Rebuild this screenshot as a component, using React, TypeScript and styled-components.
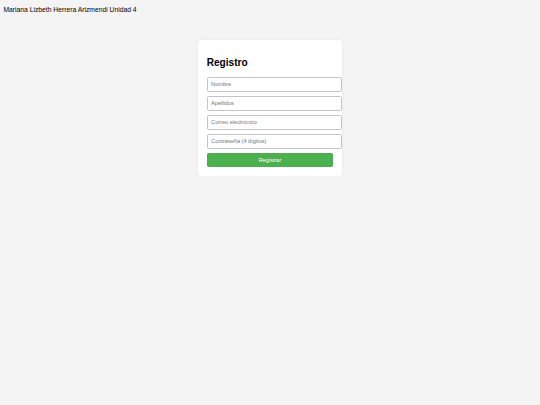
import styled, { createGlobalStyle } from "styled-components";

const GlobalStyle = createGlobalStyle`
  body {
    margin: 3.4px;
    background: #f4f4f4;
    font-family: "Liberation Sans", Arial, sans-serif;
    font-size: 6.75px;
    color: #000;
  }
`;

const Header = styled.div`
  padding-top: 2.5px;
  line-height: 7.8px;
`;

const Card = styled.form`
  width: 126.6px;
  margin: 26.3px auto 0;
  padding: 8.4px;
  background: #fff;
  border-radius: 3.4px;
  box-shadow: 0 0 4px rgba(0, 0, 0, 0.05);
  display: flex;
  flex-direction: column;
`;

const Title = styled.h2`
  font-size: 10.1px;
  font-weight: bold;
  line-height: 11.6px;
  margin: 8.4px 0;
`;

const Field = styled.input`
  width: calc(100% + 8.8px);
  height: 15px;
  box-sizing: border-box;
  padding: 0 3.4px;
  margin: 0 0 4px;
  border: 1px solid #c4c4c4;
  border-radius: 1.7px;
  font-family: "Liberation Sans", Arial, sans-serif;
  font-size: 5.6px;
  &::placeholder {
    color: #757575;
  }
`;

const Submit = styled.button`
  width: 100%;
  height: 14.4px;
  border: none;
  border-radius: 1.7px;
  background: #4caf50;
  color: #fff;
  font-family: "Liberation Sans", Arial, sans-serif;
  font-size: 5.6px;
  cursor: pointer;
`;

export default function App() {
  return (
    <>
      <GlobalStyle />
      <Header>Mariana Lizbeth Herrera Arizmendi Unidad 4</Header>
      <Card onSubmit={(e) => e.preventDefault()}>
        <Title>Registro</Title>
        <Field type="text" placeholder="Nombre" />
        <Field type="text" placeholder="Apellidos" />
        <Field type="email" placeholder="Correo electrónico" />
        <Field type="password" placeholder="Contraseña (4 dígitos)" />
        <Submit type="submit">Registrar</Submit>
      </Card>
    </>
  );
}
